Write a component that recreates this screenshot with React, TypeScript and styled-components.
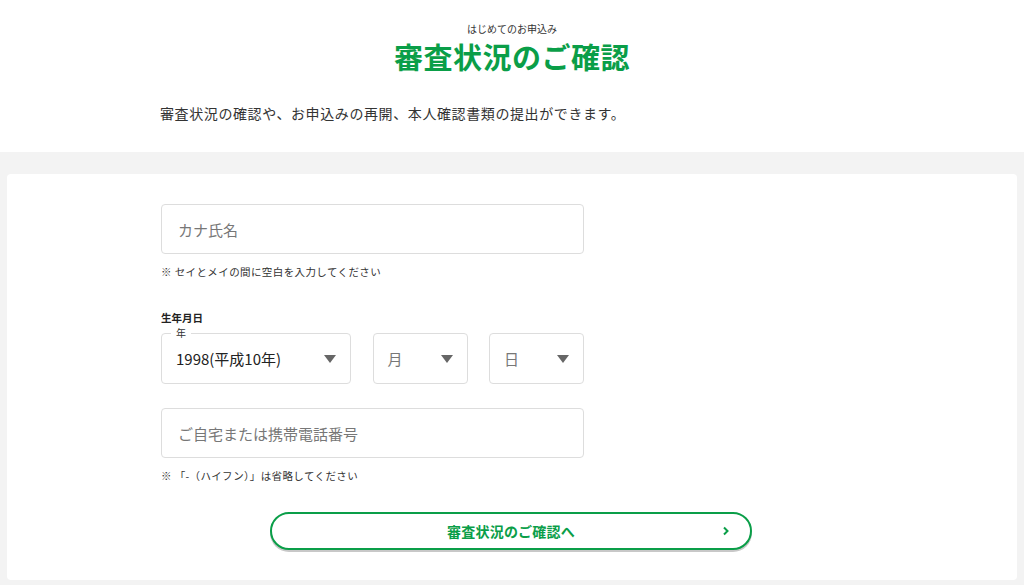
import React from "react";
import styled, { createGlobalStyle } from "styled-components";

const GREEN = "#0a9e48";

const GlobalStyle = createGlobalStyle`
  html, body {
    margin: 0;
    padding: 0;
    background: #f3f3f3;
    font-family: "Noto Sans CJK JP", "Noto Sans", sans-serif;
    color: #333;
  }
`;

const Page = styled.div`
  width: 1024px;
  min-height: 585px;
  background: #f3f3f3;
`;

const Header = styled.header`
  background: #fff;
  height: 152px;
  box-sizing: border-box;
  padding-top: 22px;
`;

const SubTitle = styled.div`
  text-align: center;
  font-size: 10px;
  line-height: 14px;
  margin-bottom: 2px;
  color: #333;
`;

const Title = styled.h1`
  margin: 0;
  text-align: center;
  font-size: 29px;
  line-height: 36px;
  font-weight: 700;
  color: ${GREEN};
  letter-spacing: 0.5px;
`;

const Lead = styled.p`
  margin: 27px 0 0 160px;
  font-size: 14px;
  line-height: 24px;
  letter-spacing: 0.6px;
  color: #333;
`;

const Card = styled.main`
  margin: 22px 7px 0;
  background: #fff;
  border-radius: 4px;
  padding: 30px 0 30px 154px;
  height: 406px;
  box-sizing: border-box;
`;

const Form = styled.div`
  width: 423px;
  display: flex;
  flex-direction: column;
`;

const TextBox = styled.div<{ $gap?: number }>`
  margin-top: ${(p) => p.$gap ?? 0}px;
  height: 50px;
  box-sizing: border-box;
  border: 1px solid #ddd;
  border-radius: 4px;
  display: flex;
  align-items: center;
  padding-left: 16px;
  font-size: 15px;
  color: #777;
`;

const Note = styled.div`
  margin-top: 10px;
  font-size: 10.5px;
  line-height: 16px;
  letter-spacing: 0.4px;
  color: #333;
`;

const Label = styled.div`
  margin-top: 31px;
  font-size: 10.5px;
  font-weight: 700;
  line-height: 14px;
  color: #222;
`;

const SelectRow = styled.div`
  margin-top: 8px;
  display: flex;
  justify-content: space-between;
`;

const Select = styled.div<{ $w: number; $filled?: boolean }>`
  position: relative;
  width: ${(p) => p.$w}px;
  height: 51px;
  box-sizing: border-box;
  border: 1px solid #ddd;
  border-radius: 4px;
  display: flex;
  align-items: center;
  justify-content: space-between;
  padding: 0 14px 0 14px;
  font-size: 15px;
  color: ${(p) => (p.$filled ? "#222" : "#777")};
`;

const Floating = styled.span`
  position: absolute;
  top: -8px;
  left: 9px;
  padding: 0 5px;
  background: #fff;
  font-size: 10px;
  line-height: 14px;
  color: #333;
`;

const Caret = styled.span`
  width: 0;
  height: 0;
  border-left: 6px solid transparent;
  border-right: 6px solid transparent;
  border-top: 8px solid #666;
`;

const ButtonWrap = styled.div`
  width: 482px;
  margin: 28px 0 0 109px;
`;

const Button = styled.button`
  width: 100%;
  height: 38px;
  border: 2px solid ${GREEN};
  border-radius: 19px;
  background: #fff;
  box-shadow: 0 2px 0 #c8c8c8;
  display: flex;
  align-items: center;
  justify-content: center;
  position: relative;
  font-family: inherit;
  font-size: 14px;
  font-weight: 700;
  letter-spacing: 0.2px;
  color: ${GREEN};
  cursor: pointer;
`;

const Chevron = styled.svg`
  position: absolute;
  right: 20px;
  top: 50%;
  transform: translateY(-50%);
`;

export default function App() {
  return (
    <Page>
      <GlobalStyle />
      <Header>
        <SubTitle>はじめてのお申込み</SubTitle>
        <Title>審査状況のご確認</Title>
        <Lead>審査状況の確認や、お申込みの再開、本人確認書類の提出ができます。</Lead>
      </Header>
      <Card>
        <Form>
          <TextBox>カナ氏名</TextBox>
          <Note>※ セイとメイの間に空白を入力してください</Note>
          <Label>生年月日</Label>
          <SelectRow>
            <Select $w={190} $filled>
              <Floating>年</Floating>
              1998(平成10年)
              <Caret />
            </Select>
            <Select $w={95}>
              月
              <Caret />
            </Select>
            <Select $w={95}>
              日
              <Caret />
            </Select>
          </SelectRow>
          <TextBox $gap={24}>ご自宅または携帯電話番号</TextBox>
          <Note>※ 「-（ハイフン）」は省略してください</Note>
        </Form>
        <ButtonWrap>
          <Button>
            審査状況のご確認へ
            <Chevron width="8" height="10" viewBox="0 0 8 10">
              <path d="M2 1.5 L5.5 5 L2 8.5" fill="none" stroke={GREEN} strokeWidth="2" />
            </Chevron>
          </Button>
        </ButtonWrap>
      </Card>
    </Page>
  );
}
